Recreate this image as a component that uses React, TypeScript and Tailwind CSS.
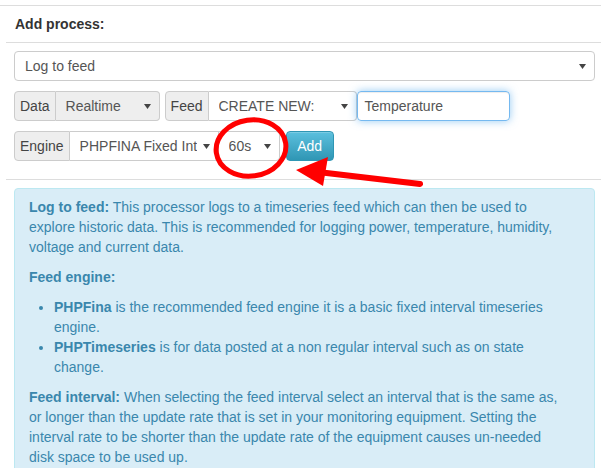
import React from 'react';

function Caret() {
  return (
    <svg width="7" height="5" viewBox="0 0 7 5" className="shrink-0 ml-auto">
      <polygon points="0,0 7,0 3.5,5" fill="#444" />
    </svg>
  );
}

function Addon({ children }: { children: React.ReactNode }) {
  return (
    <div className="h-[30px] flex items-center px-[5px] border border-[#ccc] bg-[#eee] rounded-l-[4px] text-[#444]">
      {children}
    </div>
  );
}

function FakeSelect({
  value,
  className,
  textClass = 'flex-1',
}: {
  value: string;
  className: string;
  textClass?: string;
}) {
  return (
    <div className={`h-[30px] flex items-center pl-[10px] pr-[8px] border border-[#ccc] text-[#555] ${className}`}>
      <span className={`overflow-hidden whitespace-nowrap ${textClass}`}>{value}</span>
      <Caret />
    </div>
  );
}

export default function App() {
  return (
    <div
      className="relative w-[601px] h-[468px] overflow-hidden bg-white text-[14px] leading-[20px] text-[#333]"
      style={{ fontFamily: '"Liberation Sans", Arial, sans-serif' }}
    >
      <div className="pt-[5px]">
        <div className="border-t border-[#ddd]" />
        <div className="ml-[6px]">
          <div className="py-2 pl-[9px] font-bold">Add process:</div>
          <div className="border-t border-[#ddd] pt-2 pl-2 pr-[6px] pb-[18px]">
            <FakeSelect value="Log to feed" className="bg-white rounded-[4px] w-full" />

            <div className="flex mt-[10px]">
              <Addon>Data</Addon>
              <FakeSelect value="Realtime" className="bg-[#eee] border-l-0 rounded-r-[4px] w-[104px]" />
              <div className="w-[5px]" />
              <Addon>Feed</Addon>
              <FakeSelect value="CREATE NEW:" className="bg-white border-l-0 rounded-r-[4px] w-[148px]" />
              <div className="h-[30px] w-[153px] flex items-center px-[7px] border border-[rgba(82,168,236,0.8)] rounded-[4px] shadow-[inset_0_1px_1px_rgba(0,0,0,0.075),0_0_8px_rgba(82,168,236,0.6)] text-[#555]">
                Temperature
              </div>
            </div>

            <div className="flex mt-[10px]">
              <Addon>Engine</Addon>
              <FakeSelect
                value="PHPFINA Fixed Interval"
                className="bg-white border-l-0 w-[149px]"
                textClass="w-[117px]"
              />
              <FakeSelect value="60s" className="bg-white border-l-0 rounded-r-[4px] w-[61px]" />
              <div className="ml-[6px] h-[30px] w-[48px] flex items-center justify-center rounded-[4px] border border-[#2f96b4] bg-gradient-to-b from-[#5bc0de] to-[#2f96b4] text-white shadow-[inset_0_1px_0_rgba(255,255,255,0.2)]">
                Add
              </div>
            </div>
          </div>

          <div className="border-t border-[#ddd] pt-2 pl-2 pr-[6px]">
            <div className="bg-[#d9edf7] border border-[#bce8f1] rounded-[4px] text-[#3a87ad] pt-2 pb-2 pl-[14px] pr-[35px]">
              <p className="mb-[10px]">
                <b>Log to feed:</b> This processor logs to a timeseries feed which can then be used to explore historic data. This is recommended for logging power, temperature, humidity, voltage and current data.
              </p>
              <p className="mb-[10px] font-bold">Feed engine:</p>
              <ul className="list-disc ml-[25px] mb-[10px]">
                <li>
                  <b>PHPFina</b> is the recommended feed engine it is a basic fixed interval timeseries engine.
                </li>
                <li>
                  <b>PHPTimeseries</b> is for data posted at a non regular interval such as on state change.
                </li>
              </ul>
              <p className="mb-[10px]">
                <b>Feed interval:</b> When selecting the feed interval select an interval that is the same as, or longer than the update rate that is set in your monitoring equipment. Setting the interval rate to be shorter than the update rate of the equipment causes un-needed disk space to be used up.
              </p>
            </div>
          </div>
        </div>
      </div>

      <svg className="absolute inset-0 pointer-events-none" width="601" height="468" viewBox="0 0 601 468">
        <ellipse cx="251" cy="148" rx="35" ry="28" fill="none" stroke="#f00" strokeWidth="5" transform="rotate(-8 251 148)" />
        <line x1="318" y1="172" x2="420" y2="184" stroke="#f00" strokeWidth="6" strokeLinecap="round" />
        <polygon points="296,170 328,157 323,186" fill="#f00" />
      </svg>
    </div>
  );
}
